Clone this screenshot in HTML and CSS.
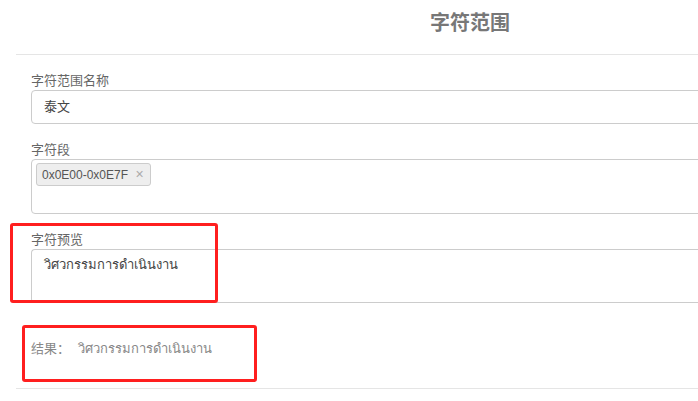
FILE: index.html
```html
<!DOCTYPE html>
<html lang="zh">
<head>
  <meta charset="UTF-8">
  <title>字符范围</title>
  <link rel="stylesheet" href="styles.css">
</head>
<body>
  <div class="page">
    <div class="header">
      <h2>字符范围</h2>
    </div>

    <div class="form">
      <div class="group">
        <label>字符范围名称</label>
        <div class="input">泰文</div>
      </div>

      <div class="group">
        <label>字符段</label>
        <div class="input tags">
          <span class="tag">0x0E00-0x0E7F <span class="close">×</span></span>
        </div>
      </div>

      <div class="group">
        <label>字符预览</label>
        <div class="input area">วิศวกรรมการดำเนินงาน</div>
      </div>

      <div class="result">结果： <span>วิศวกรรมการดำเนินงาน</span></div>
    </div>

    <div class="mark mark-preview"></div>
    <div class="mark mark-result"></div>
  </div>
</body>
</html>
```

FILE: styles.css
```css
html, body {
  height: 100%;
}
body {
  margin: 0;
  font-family: 'Liberation Sans', 'Noto Sans CJK SC', sans-serif;
  color: #333;
  background: #fff;
  overflow: hidden;
}
.page {
  position: relative;
  margin-left: 16px;
  width: 908px;
}
.header {
  height: 54px;
  border-bottom: 1px solid #e5e5e5;
}
.header h2 {
  margin: 0;
  padding-top: 10px;
  text-align: center;
  font-size: 20px;
  line-height: 26px;
  color: #777;
}
.form {
  padding: 18px 0 0 15px;
  border-bottom: 1px solid #e5e5e5;
  height: 334px;
  box-sizing: border-box;
}
.group {
  margin-bottom: 18px;
}
.group label {
  display: block;
  font-size: 13px;
  line-height: 16px;
  color: #666;
  margin-bottom: 1px;
}
.input {
  box-sizing: border-box;
  height: 34px;
  border: 1px solid #ccc;
  border-radius: 4px;
  padding: 0 12px;
  font-size: 13px;
  line-height: 32px;
  color: #444;
}
.tags {
  height: 55px;
  padding: 3px 4px;
  line-height: 22px;
}
.tag {
  display: inline-block;
  background: #eee;
  border: 1px solid #ccc;
  border-radius: 3px;
  padding: 0 6px 0 5px;
  font-size: 12px;
  line-height: 20px;
  color: #555;
}
.tag .close {
  font-size: 14px;
  color: #aaa;
  margin-left: 4px;
}
.area {
  height: 54px;
  border-right: none;
  border-radius: 4px 0 0 4px;
  line-height: 30px;
}
.result {
  margin-top: 35px;
  font-size: 13px;
  color: #888;
}
.result span {
  margin-left: 4px;
}
.mark {
  position: absolute;
  border: 3px solid #ff1f1f;
  border-radius: 3px;
  box-sizing: border-box;
}
.mark-preview {
  left: -6px;
  top: 223px;
  width: 208px;
  height: 80px;
}
.mark-result {
  left: 6px;
  top: 325px;
  width: 235px;
  height: 57px;
}
```
